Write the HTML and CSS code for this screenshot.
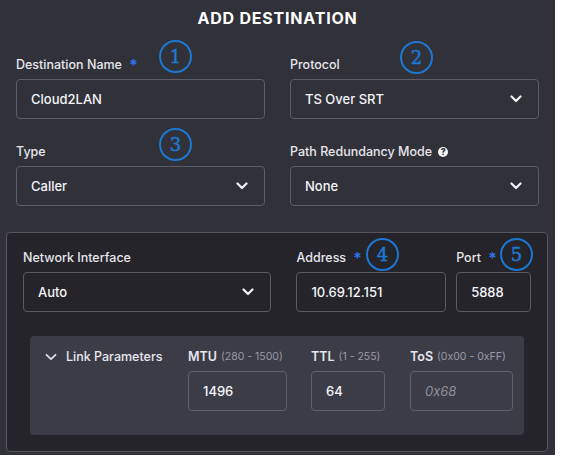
FILE: index.html
```html
<!DOCTYPE html>
<html>
<head>
<meta charset="utf-8">
<link rel="stylesheet" href="styles.css">
</head>
<body>
<div class="panel">
  <h1 class="title">ADD DESTINATION</h1>
  <div class="grid">
    <div class="field">
      <div class="label">Destination Name <span class="req">*</span></div>
      <div class="input">Cloud2LAN</div>
    </div>
    <div class="field">
      <div class="label">Protocol</div>
      <div class="input select">TS Over SRT
        <svg class="chev" width="12" height="8" viewBox="0 0 12 8"><path d="M1.5 1.5 L6 6 L10.5 1.5" fill="none" stroke="#f2f2f5" stroke-width="2.2" stroke-linecap="round" stroke-linejoin="round"/></svg>
      </div>
    </div>
    <div class="field">
      <div class="label">Type</div>
      <div class="input select">Caller
        <svg class="chev" width="12" height="8" viewBox="0 0 12 8"><path d="M1.5 1.5 L6 6 L10.5 1.5" fill="none" stroke="#f2f2f5" stroke-width="2.2" stroke-linecap="round" stroke-linejoin="round"/></svg>
      </div>
    </div>
    <div class="field">
      <div class="label">Path Redundancy Mode <span class="help">?</span></div>
      <div class="input select">None
        <svg class="chev" width="12" height="8" viewBox="0 0 12 8"><path d="M1.5 1.5 L6 6 L10.5 1.5" fill="none" stroke="#f2f2f5" stroke-width="2.2" stroke-linecap="round" stroke-linejoin="round"/></svg>
      </div>
    </div>
  </div>

  <div class="net">
    <div class="net-row">
      <div class="field w-iface">
        <div class="label">Network Interface</div>
        <div class="input select">Auto
          <svg class="chev" width="12" height="8" viewBox="0 0 12 8"><path d="M1.5 1.5 L6 6 L10.5 1.5" fill="none" stroke="#f2f2f5" stroke-width="2.2" stroke-linecap="round" stroke-linejoin="round"/></svg>
        </div>
      </div>
      <div class="field w-addr">
        <div class="label">Address <span class="req">*</span></div>
        <div class="input">10.69.12.151</div>
      </div>
      <div class="field w-port">
        <div class="label">Port <span class="req">*</span></div>
        <div class="input">5888</div>
      </div>
    </div>

    <div class="link">
      <div class="link-head">
        <svg class="link-chev" width="12" height="8" viewBox="0 0 12 8"><path d="M1.5 1.8 L6 6.2 L10.5 1.8" fill="none" stroke="#dcdce4" stroke-width="1.8" stroke-linecap="round" stroke-linejoin="round"/></svg>
        <span class="link-title">Link Parameters</span>
      </div>
      <div class="field w-mtu">
        <div class="label">MTU <span class="range">(280 - 1500)</span></div>
        <div class="input">1496</div>
      </div>
      <div class="field w-ttl">
        <div class="label">TTL <span class="range">(1 - 255)</span></div>
        <div class="input">64</div>
      </div>
      <div class="field w-tos">
        <div class="label">ToS <span class="range">(0x00 - 0xFF)</span></div>
        <div class="input placeholder">0x68</div>
      </div>
    </div>
  </div>

  <span class="badge b1">1</span>
  <span class="badge b2">2</span>
  <span class="badge b3">3</span>
  <span class="badge b4">4</span>
  <span class="badge b5">5</span>
</div>
</body>
</html>
```

FILE: styles.css
```css
html, body {
  margin: 0;
  padding: 0;
  background: #ffffff;
}

body {
  font-family: Inter, "Noto Sans", "DejaVu Sans", sans-serif;
}

.panel {
  position: relative;
  width: 555px;
  height: 455px;
  box-sizing: border-box;
  padding-top: 8px;
  background: #313139;
  color: #ececf2;
}

.title {
  margin: 0;
  height: 20px;
  line-height: 20px;
  text-align: center;
  font-size: 16px;
  font-weight: 700;
  letter-spacing: 0.8px;
  color: #ffffff;
}

.grid {
  display: grid;
  grid-template-columns: 249px 249px;
  column-gap: 25px;
  row-gap: 25px;
  padding: 0 16px;
  margin-top: 29px;
}

.field {
  display: flex;
  flex-direction: column;
}

.label {
  height: 16px;
  line-height: 16px;
  font-size: 12.5px;
  font-weight: 500;
  color: #e6e6ec;
  margin-bottom: 6px;
  white-space: nowrap;
  display: flex;
  align-items: center;
  gap: 4px;
}

.req {
  color: #2f72e8;
  font-size: 16px;
  font-weight: 700;
  margin-left: 3px;
  line-height: 16px;
}

.help {
  display: inline-flex;
  align-items: center;
  justify-content: center;
  width: 10px;
  height: 10px;
  border-radius: 50%;
  background: #f4f4f6;
  color: #2a2a32;
  font-size: 8.5px;
  font-weight: 800;
  margin-left: 2px;
}

.input {
  box-sizing: border-box;
  height: 40px;
  border: 1px solid #5d5d69;
  border-radius: 4px;
  padding: 0 14px;
  display: flex;
  align-items: center;
  font-size: 13px;
  font-weight: 500;
  color: #f4f4f8;
}

.select {
  justify-content: space-between;
  padding-right: 16px;
}

.chev {
  display: block;
}

.net {
  margin: 26px 7px 0 6px;
  height: 220px;
  box-sizing: border-box;
  border: 1px solid #56565f;
  border-radius: 4px;
  background: #24242a;
  padding: 17px 16px 16px 16px;
}

.net-row {
  display: flex;
}

.w-iface { width: 249px; margin-right: 25px; }
.w-addr { width: 150px; margin-right: 10px; }
.w-port { width: 75px; }

.net .input {
  border-color: #5a5a65;
}

.link {
  margin: 24px 7px 0 7px;
  height: 99px;
  box-sizing: border-box;
  background: #3c3c47;
  border-radius: 4px;
  padding: 13px 11px 24px 15px;
  display: flex;
  align-items: flex-start;
}

.link-head {
  width: 143px;
  height: 16px;
  display: flex;
  align-items: center;
  gap: 9px;
}

.link-chev {
  display: block;
}

.link-title {
  font-size: 12.5px;
  font-weight: 500;
  color: #e8e8ee;
  line-height: 16px;
}

.w-mtu { width: 99px; margin-right: 24px; }
.w-ttl { width: 74px; margin-right: 25px; }
.w-tos { width: 103px; }

.w-mtu .label, .w-ttl .label, .w-tos .label {
  font-weight: 600;
}

.link .input {
  border-color: #60606c;
}

.range {
  font-size: 10.5px;
  font-weight: 400;
  color: #9a9aa6;
  margin-left: 0;
}

.placeholder {
  color: #8e8e9a;
  font-style: italic;
  font-weight: 400;
}

.badge {
  position: absolute;
  box-sizing: border-box;
  width: 33px;
  height: 33px;
  border: 2.5px solid #1c78d2;
  border-radius: 50%;
  display: flex;
  align-items: center;
  justify-content: center;
  font-family: "DejaVu Serif", "Liberation Serif", serif;
  font-size: 18px;
  font-weight: 400;
  -webkit-text-stroke: 0.5px #1c78d2;
  color: #1c78d2;
  line-height: 1;
}

.b1 { left: 159px; top: 40px; }
.b2 { left: 400px; top: 41px; }
.b3 { left: 159px; top: 128px; }
.b4 { left: 366px; top: 238px; }
.b5 { left: 500px; top: 238px; }
```
